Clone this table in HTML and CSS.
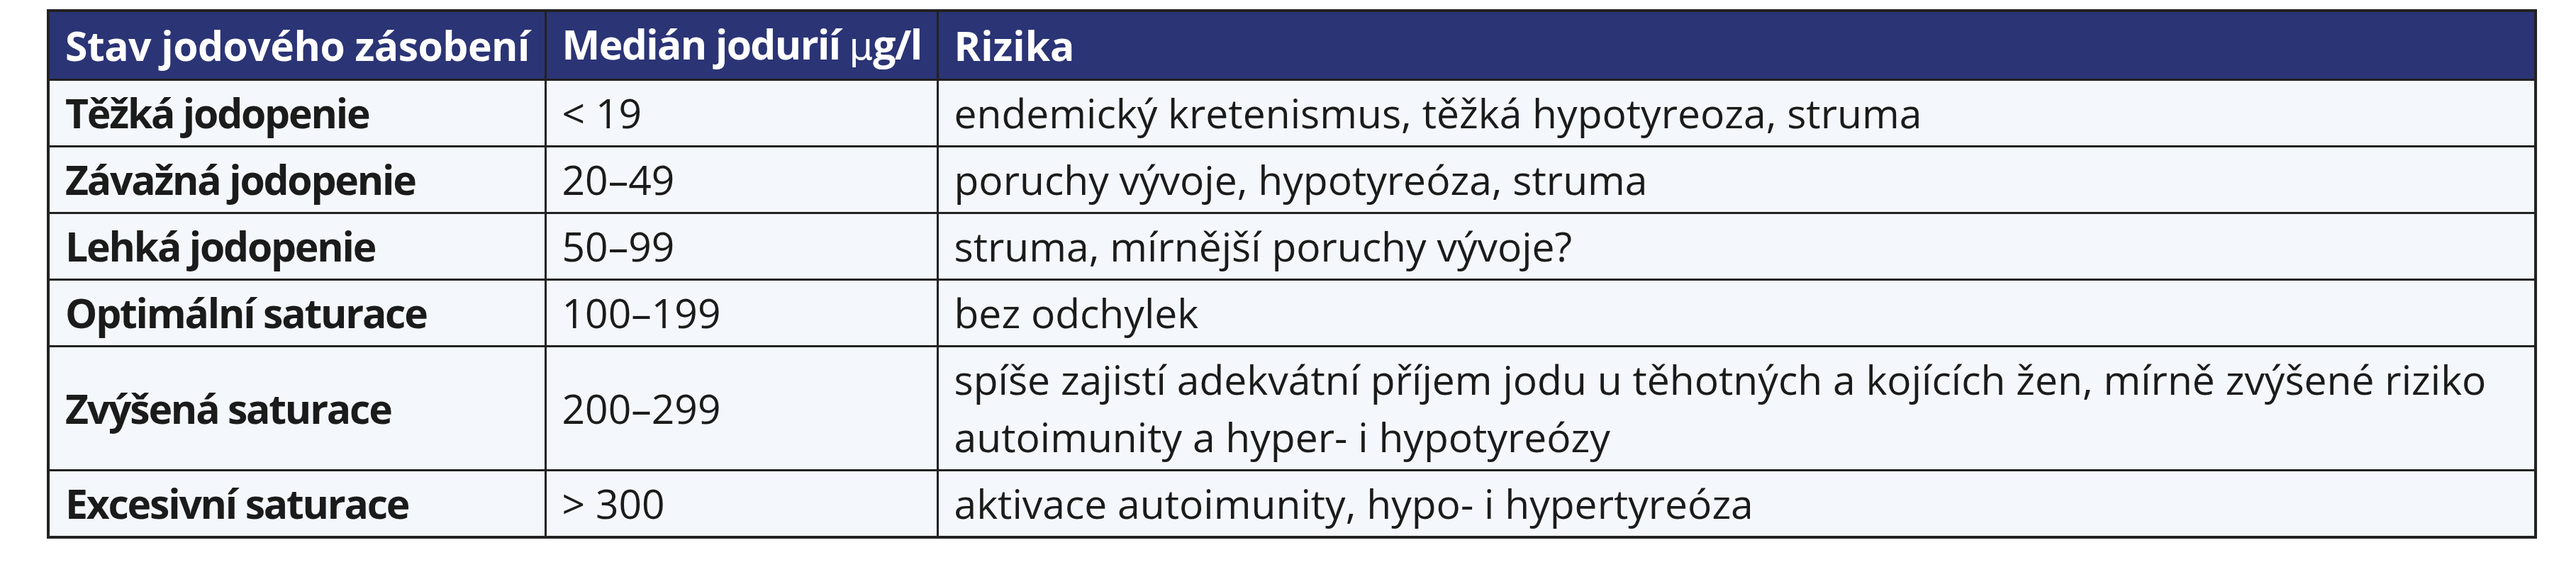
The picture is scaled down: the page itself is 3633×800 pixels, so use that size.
FILE: index.html
```html
<!DOCTYPE html>
<html lang="cs">
<head>
<meta charset="utf-8">
<title>Stav jodového zásobení</title>
<link rel="stylesheet" href="styles.css">
</head>
<body>
<div class="page">
<table class="iodine">
  <colgroup>
    <col class="c1">
    <col class="c2">
    <col class="c3">
  </colgroup>
  <thead>
    <tr>
      <th class="h-state">Stav jodového zásobení</th>
      <th class="h-median">Medián jodurií <span class="mu">μ</span>g/l</th>
      <th>Rizika</th>
    </tr>
  </thead>
  <tbody>
    <tr>
      <td class="state">Těžká jodopenie</td>
      <td>&lt; 19</td>
      <td>endemický kretenismus, těžká hypotyreoza, struma</td>
    </tr>
    <tr>
      <td class="state">Závažná jodopenie</td>
      <td>20–49</td>
      <td>poruchy vývoje, hypotyreóza, struma</td>
    </tr>
    <tr>
      <td class="state">Lehká jodopenie</td>
      <td>50–99</td>
      <td>struma, mírnější poruchy vývoje?</td>
    </tr>
    <tr>
      <td class="state">Optimální saturace</td>
      <td>100–199</td>
      <td>bez odchylek</td>
    </tr>
    <tr>
      <td class="state">Zvýšená saturace</td>
      <td>200–299</td>
      <td>spíše zajistí adekvátní příjem jodu u těhotných a kojících žen, mírně zvýšené riziko autoimunity a hyper- i hypotyreózy</td>
    </tr>
    <tr>
      <td class="state">Excesivní saturace</td>
      <td>&gt; 300</td>
      <td>aktivace autoimunity, hypo- i hypertyreóza</td>
    </tr>
  </tbody>
</table>
</div>
</body>
</html>
```

FILE: styles.css
```css
html, body {
  margin: 0;
  padding: 0;
  background: #ffffff;
}

.page {
  padding: 13px 55px 0 66px;
}

.iodine {
  width: 3512px;
  border-collapse: collapse;
  table-layout: fixed;
  border: 4px solid #222222;
  font-family: "Open Sans", "Noto Sans", sans-serif;
  font-size: 57px;
  line-height: 81px;
  color: #1b1b1b;
}

.c1 { width: 701px; }
.c2 { width: 553px; }
.c3 { width: auto; }

.iodine th,
.iodine td {
  border: 3px solid #222222;
  padding: 5px 8px 5px 22px;
  text-align: left;
  vertical-align: middle;
  background: #f4f8fc;
}

.iodine th {
  background: #2b3475;
  color: #ffffff;
  font-weight: 700;
  font-size: 57px;
  white-space: nowrap;
  overflow: hidden;
}

.iodine th.h-state {
  letter-spacing: -0.5px;
}

.iodine th.h-median {
  letter-spacing: -1.6px;
}

.iodine td.state {
  font-weight: 700;
  letter-spacing: -2.2px;
}

.mu {
  font-family: "DejaVu Sans", sans-serif;
  font-weight: 400;
  font-size: 0.92em;
  letter-spacing: 0;
}
```
